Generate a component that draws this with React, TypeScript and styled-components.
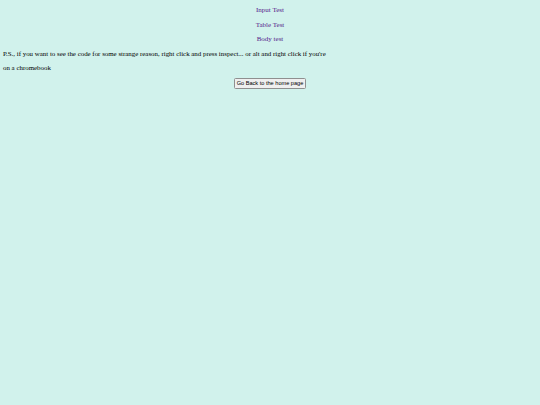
import React from 'react';
import styled, { createGlobalStyle } from 'styled-components';

const GlobalStyle = createGlobalStyle`
  html, body {
    margin: 0;
    padding: 0;
    background: #d1f2ec;
  }
  body {
    font-family: 'Liberation Serif', 'Times New Roman', serif;
    font-size: 7px;
    color: #000;
  }
`;

const Page = styled.div`
  display: flex;
  flex-direction: column;
  padding: 3px 3px 0 3px;
  line-height: 14.5px;
`;

const NavLink = styled.a`
  display: block;
  text-align: center;
  color: #551a8b;
  text-decoration: none;
`;

const Note = styled.p`
  margin: 0;
  max-width: 330px;
  font-size: 6.9px;
`;

const BackButton = styled.button`
  align-self: center;
  margin-top: 2.5px;
  padding: 1px 2px;
  font-family: 'Liberation Sans', Arial, sans-serif;
  font-size: 5.6px;
  line-height: 6.5px;
  color: #000;
  background: #efefef;
  border: 0.5px solid #8f8f8f;
  border-radius: 1.5px;
`;

const links = ['Input Test', 'Table Test', 'Body test'];

export default function App() {
  return (
    <>
      <GlobalStyle />
      <Page>
        {links.map((label) => (
          <NavLink href="#" key={label}>
            {label}
          </NavLink>
        ))}
        <Note>
          P.S., if you want to see the code for some strange reason, right click and press inspect... or alt and right
          click if you're on a chromebook
        </Note>
        <BackButton>Go Back to the home page</BackButton>
      </Page>
    </>
  );
}
